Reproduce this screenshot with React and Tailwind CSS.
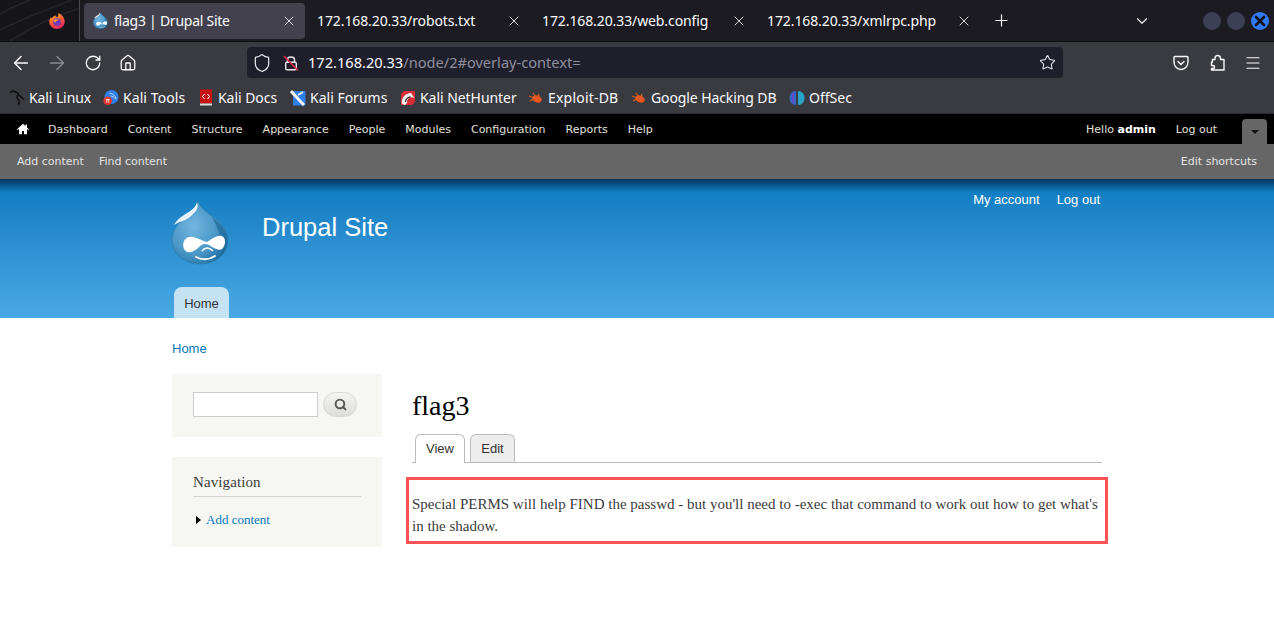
import React from "react";
import { ArrowLeft, ArrowRight, RotateCw, Home, Shield, Star, Menu, X, Plus, ChevronDown, Search } from "lucide-react";

const ui = "font-['Noto_Sans',sans-serif]";

function Drop({ id, className }) {
  return (
    <svg viewBox="0 0 57 65" className={className}>
      <defs>
        <radialGradient id={id} cx="38%" cy="42%" r="70%">
          <stop offset="0" stopColor="#72b6de" />
          <stop offset="0.6" stopColor="#4a97c8" />
          <stop offset="1" stopColor="#1d6a9e" />
        </radialGradient>
      </defs>
      <path d="M27 0C28 7 34 11 41 16C51 23 57 31 57 40C57 54 45 64 29 64C13 64 1 54 1 40C1 29 9 21 17 16C22 13 26 8 27 0Z" fill={`url(#${id})`} stroke="#2f7aa8" strokeWidth="0.6" />
      <path d="M41 17C50 24 56 32 56 40C56 46 53 52 49 56C52 48 52 42 49 35C47 29 44 23 41 17Z" fill="#1f6d9f" opacity="0.75" />
      <path d="M26 2C25 8 19 11 13 15C8 18 5 21 3 25C9 21 16 21 22 14C25 11 28 8 26 2Z" fill="#ffffff" opacity="0.9" />
      <path d="M18 37C25 36 30 41 36 42C41 39 46 35 51 36C55 38 55 45 51 49C47 51 43 48 38 45C34 43 31 44 28 47C25 50 21 53 17 52C11 51 10 39 18 37Z" fill="#ffffff" />
      <path d="M31 51C34 47 38 47 42 51" fill="none" stroke="#ffffff" strokeWidth="1.5" />
      <path d="M25 57C31 60 38 60 44 56" fill="none" stroke="#ffffff" strokeWidth="1.8" strokeLinecap="round" />
    </svg>
  );
}

function Firefox() {
  return (
    <svg width="16" height="16" viewBox="0 0 16 16">
      <defs>
        <linearGradient id="ff" x1="0.1" y1="0" x2="0.6" y2="1">
          <stop offset="0" stopColor="#ffc021" />
          <stop offset="0.55" stopColor="#ff5a35" />
          <stop offset="1" stopColor="#e0246a" />
        </linearGradient>
      </defs>
      <path d="M8 16C3.6 16 .3 12.8 .3 8.8C.3 7 1 5.2 2 4.2C2.2 4.8 2.6 5.2 3 5.4C3.7 3.4 5.4 2.6 6.6 2.2C6.4 3.2 6.8 3.8 7.4 4C8.4 4.2 9.6 4.2 9.4 0C13 1.6 15.7 4.8 15.7 8.8C15.7 12.8 12.4 16 8 16Z" fill="url(#ff)" />
      <circle cx="8" cy="9" r="3.8" fill="#6a3bb8" />
      <path d="M4.5 7.4C6 5.9 9 5.8 10.5 7C8.5 6.8 7 7.8 6.8 9.4C6 9.1 5 8.4 4.5 7.4Z" fill="#ff9a2e" />
    </svg>
  );
}

function Tab({ title, active, icon, className }) {
  return (
    <div className={`${className} h-[36px] flex items-center shrink-0 rounded-[4px] pl-[9px] ${active ? "bg-[#42414d] pr-[8px] tracking-[-0.25px]" : "pr-[9px] tracking-[-0.1px]"}`}>
      {icon}
      <span className="flex-1 text-[14px] text-[#fbfbfe] whitespace-nowrap overflow-hidden">{title}</span>
      <X size={16} strokeWidth={1.4} className="text-[#e6e6ea]" />
    </div>
  );
}

function Mark({ icon, label, w, track }) {
  return (
    <div className={`flex items-center gap-[4px] shrink-0 ${w}`}>
      <span className="w-[16px] h-[16px] flex items-center justify-center shrink-0">{icon}</span>
      <span className={`text-[14px] text-[#fbfbfe] whitespace-nowrap ${track || ""}`}>{label}</span>
    </div>
  );
}

const Bug = () => (
  <svg width="16" height="14" viewBox="0 0 16 14">
    <ellipse cx="9" cy="8" rx="5" ry="3.4" fill="#e8551f" transform="rotate(20 9 8)" />
    <path d="M1 5L6 7M2 10L6 8M5 2L8 6M11 3L10 6" stroke="#d9601f" strokeWidth="1.2" />
  </svg>
);

const KaliDragon = () => (
  <svg width="17" height="17" viewBox="0 0 17 17" fill="none" stroke="#0d0d0d" strokeWidth="1.5">
    <path d="M1 3C4 1 8 2 10 5C12 8 15 9 16 11M10 5C8 7 8 9 10 11C11 12 11 14 10 16" />
  </svg>
);

const KaliTools = () => (
  <svg width="17" height="17" viewBox="0 0 17 17">
    <circle cx="9" cy="8" r="7.5" fill="#2f7fe8" />
    <path d="M7 4C10 4 13 6 14 10M8 7C10 7 12 8 13 10" stroke="#bcd8f8" strokeWidth="1" fill="none" />
    <circle cx="5" cy="12" r="4.5" fill="#e5352c" />
    <path d="M3 10.5H7M4 10.5V14M6 10.5V14" stroke="#fff" strokeWidth="0.9" />
  </svg>
);

const KaliDocs = () => (
  <svg width="14" height="17" viewBox="0 0 14 17">
    <rect x="1" y="0.5" width="12" height="14" fill="#c81414" />
    <rect x="1" y="14.5" width="12" height="2" fill="#ddd" />
    <path d="M5.5 5L3.5 7.5L5.5 10M8.5 5L10.5 7.5L8.5 10" stroke="#fff" strokeWidth="1" fill="none" />
  </svg>
);

const KaliForums = () => (
  <svg width="16" height="16" viewBox="0 0 16 16">
    <path d="M3 1H15.5V15.5H3Z" fill="#2f7fe8" />
    <path d="M1 1L10 11L14 15" stroke="#f2f2f2" strokeWidth="3" fill="none" />
    <path d="M8 5L13 2" stroke="#f2f2f2" strokeWidth="1.5" />
  </svg>
);

const NetHunter = () => (
  <svg width="16" height="16" viewBox="0 0 16 16">
    <path d="M4 1H15V12L12 15H1V4Z" fill="#d92c35" />
    <path d="M2 14C1 8 5 3 11 3L14.5 8C10 6 7 8 7 13L5 15Z" fill="#f0f0f0" />
    <path d="M5.5 12C5.5 9 8 7 10.5 7" stroke="#333" strokeWidth="1.3" fill="none" />
  </svg>
);

const OffSec = () => (
  <svg width="16" height="16" viewBox="0 0 16 16">
    <path d="M7 1C3 1 0.5 4 0.5 8C0.5 12 3 15 7 15Z" fill="#2f69c9" />
    <path d="M9 1C13 1 15.5 4 15.5 8C15.5 12 13 15 9 15Z" fill="#2aa3c8" />
    <path d="M5 3C3.5 5 3.5 11 5 13" stroke="#7a3fc0" strokeWidth="1.6" fill="none" />
  </svg>
);

function Browser() {
  return (
    <div className={`${ui} bg-[#3a3a41] h-[113px] flex flex-col`}>
      <div className="h-[41px] bg-[#1c1b22] flex items-center">
        <div className="relative w-[80px] h-full shrink-0 flex items-center justify-start pl-[49px] border-r border-[#4a4a50] bg-[#15151a] overflow-hidden">
          <svg width="80" height="41" viewBox="0 0 80 41" fill="none" stroke="#26262c" strokeWidth="1.5" className="absolute left-0 top-0">
            <path d="M0 30C20 20 40 12 72 0M10 41C30 28 55 16 80 8M0 14C10 8 20 4 30 0" />
          </svg>
          <span className="relative flex"><Firefox /></span>
        </div>
        <div className="ml-[4px] flex items-center">
          <Tab active className="w-[221px] mr-[3px]" title="flag3 | Drupal Site" icon={<span className="mr-[6px] flex"><Drop id="dt" className="w-[15px] h-[17px]" /></span>} />
          <Tab className="w-[223px] mr-[2px]" title="172.168.20.33/robots.txt" icon={null} />
          <Tab className="w-[223px] mr-[2px]" title="172.168.20.33/web.config" icon={null} />
          <Tab className="w-[223px]" title="172.168.20.33/xmlrpc.php" icon={null} />
          <Plus size={19} strokeWidth={1.5} className="text-[#fbfbfe] ml-[11px]" />
        </div>
        <ChevronDown size={18} strokeWidth={1.6} className="text-[#e6e6ea] ml-[122px]" />
        <div className="flex items-center gap-[6px] ml-[52px]">
          <span className="w-[18px] h-[18px] rounded-full bg-[#3d4055]"></span>
          <span className="w-[18px] h-[18px] rounded-full bg-[#3d4055]"></span>
          <span className="w-[18px] h-[18px] rounded-full bg-[#2f7bf2] flex items-center justify-center"><X size={16} strokeWidth={4} className="text-[#10131c]" /></span>
        </div>
      </div>
      <div className="h-[42px] border-t border-[#0f0f12] flex items-center">
        <div className="w-[247px] flex items-center shrink-0 pl-[10px]">
          <ArrowLeft size={22} strokeWidth={1.6} className="text-[#fbfbfe]" />
          <ArrowRight size={22} strokeWidth={1.6} className="text-[#8a8a90] ml-[14px]" />
          <RotateCw size={18} strokeWidth={1.7} className="text-[#fbfbfe] ml-[16px]" />
          <Home size={18} strokeWidth={1.7} className="text-[#fbfbfe] ml-[17px]" />
        </div>
        <div className="w-[816px] h-[31px] bg-[#1f1e2b] rounded-[4px] flex items-center pl-[5px] pr-[7px] shrink-0">
          <Shield size={20} strokeWidth={1.5} className="text-[#e8e8ec]" />
          <svg width="16" height="16" viewBox="0 0 16 16" fill="none" className="ml-[11px]">
            <path d="M4.5 7V4.5C4.5 1.2 11.5 1.2 11.5 4.5V7" stroke="#e8e8ec" strokeWidth="1.4" />
            <rect x="2.7" y="7.2" width="10.6" height="7.6" rx="1.2" stroke="#e8e8ec" strokeWidth="1.4" />
            <path d="M1 1L15 15.5" stroke="#e22850" strokeWidth="1.5" />
          </svg>
          <span className="ml-[9px] text-[14.6px] text-[#fbfbfe] whitespace-nowrap">172.168.20.33<span className="text-[#8f8f9d]">/node/2#overlay-context=</span></span>
          <Star size={17} strokeWidth={1.5} className="text-[#e8e8ec] ml-auto" />
        </div>
        <div className="flex items-center ml-[110px]">
          <svg width="16" height="16" viewBox="0 0 16 16" fill="none" stroke="#fbfbfe" strokeWidth="1.4"><path d="M2 1.5H14C14.6 1.5 15 2 15 2.5V7C15 11 12 14.5 8 14.5C4 14.5 1 11 1 7V2.5C1 2 1.4 1.5 2 1.5Z" /><path d="M5 6.5L8 9.5L11 6.5" strokeLinecap="round" /></svg>
          <svg width="16" height="17" viewBox="0 0 16 17" fill="none" stroke="#fbfbfe" strokeWidth="1.4" strokeLinejoin="round" className="ml-[21px]">
            <path d="M2.5 8H1.5V11.5H3C5 11.5 5 14.5 3 14.5H1.5V16H14V5.5H10.5V4.5C10.5 0.5 5 0.5 5 4.5V5.5H2.5Z" />
          </svg>
          <Menu size={18} strokeWidth={1.6} className="text-[#fbfbfe] ml-[18px]" />
        </div>
      </div>
      <div className="h-[30px] flex items-center pl-[9px] pb-[1px]">
        <Mark w="w-[94px]" track="tracking-[-0.1px]" icon={<KaliDragon />} label="Kali Linux" />
        <Mark w="w-[95px]" track="tracking-[0.08px]" icon={<KaliTools />} label="Kali Tools" />
        <Mark w="w-[92px]" track="tracking-[-0.05px]" icon={<KaliDocs />} label="Kali Docs" />
        <Mark w="w-[110px]" icon={<KaliForums />} label="Kali Forums" />
        <Mark w="w-[128px]" track="tracking-[-0.05px]" icon={<NetHunter />} label="Kali NetHunter" />
        <Mark w="w-[103px]" track="tracking-[0.2px]" icon={<Bug />} label="Exploit-DB" />
        <Mark w="w-[158px]" track="tracking-[-0.1px]" icon={<Bug />} label="Google Hacking DB" />
        <Mark icon={<OffSec />} label="OffSec" />
      </div>
    </div>
  );
}

function AdminBar() {
  const items = ["Dashboard", "Content", "Structure", "Appearance", "People", "Modules", "Configuration", "Reports", "Help"];
  return (
    <div className="font-['DejaVu_Sans',sans-serif] text-[11px]">
      <div className="h-[31px] bg-black border-t border-[#2a2a2e] flex items-center text-[#e0e0d8]">
        <svg width="12" height="12" viewBox="0 0 12 12" className="ml-[17px] mr-[19px] shrink-0" fill="#fff">
          <path d="M6 .8L0 6.2L.8 7L2 6V11.2H5V8H7V11.2H10V6L11.2 7L12 6.2L10 4.4V1.5H8.5V3L6 .8Z" />
        </svg>
        <div className="flex gap-[20px] pt-[2px]">
          {items.map((i) => <span key={i}>{i}</span>)}
        </div>
        <div className="ml-auto flex items-center h-full">
          <span className="pt-[2px]">Hello <b className="text-white">admin</b></span>
          <span className="ml-[20px] pt-[2px]">Log out</span>
          <div className="ml-[25px] mr-[7px] w-[25px] h-[25px] self-end bg-[#666] rounded-t-[4px] flex items-center justify-center">
            <span className="w-0 h-0 border-x-[4px] border-x-transparent border-t-[4px] border-t-[#111]"></span>
          </div>
        </div>
      </div>
      <div className="h-[35px] bg-[#666] flex items-center px-[17px] pt-[2px] text-[#e4e4e4]">
        <span>Add content</span>
        <span className="ml-[15px]">Find content</span>
        <span className="ml-auto">Edit shortcuts</span>
      </div>
    </div>
  );
}

function SiteHeader() {
  return (
    <div className="relative h-[139px] bg-gradient-to-b from-[#0779bf] to-[#48a9e4] font-['Liberation_Sans',sans-serif]">
      <div className="absolute inset-x-0 top-0 h-[13px] bg-gradient-to-b from-[#00233f]/80 to-transparent"></div>
      <div className="relative w-[930px] h-full ml-[172px] flex flex-col">
        <div className="flex flex-1">
          <div className="mt-[21px] -ml-[1px] shrink-0"><Drop id="dl" className="w-[57px] h-[65px]" /></div>
          <h1 className="ml-[34px] mt-[31px] text-[25.5px] leading-[34px] text-white">Drupal Site</h1>
          <div className="ml-auto mt-[12px] mr-[2px] text-[13px] leading-[17px] text-white flex gap-[17px]">
            <span>My account</span>
            <span>Log out</span>
          </div>
        </div>
        <div className="ml-[2px] w-[55px] h-[31px] pt-[2px] bg-[#c5e2f5] rounded-t-[8px] text-[#333] text-[13px] flex items-center justify-center">Home</div>
      </div>
    </div>
  );
}

function Sidebar() {
  return (
    <aside className="w-[210px] shrink-0 font-['Liberation_Serif',serif]">
      <div className="h-[63px] bg-[#f6f6f2] flex items-center pl-[21px] pb-[3px]">
        <div className="w-[125px] h-[25px] bg-white border border-[#ccc]"></div>
        <div className="ml-[5px] w-[34px] h-[25px] rounded-[13px] bg-gradient-to-b from-[#f5f5f3] to-[#dcdcd8] border border-[#d8d8d4] flex items-center justify-center">
          <Search size={13} strokeWidth={3.6} className="text-[#555]" />
        </div>
      </div>
      <div className="mt-[20px] h-[90px] bg-[#f6f6f2] px-[21px] pt-[15px]">
        <h2 className="text-[15px] leading-[20px] text-[#3b3b3b] border-b border-[#d4d4d0] w-[168px] pb-[4px] tracking-[0.1px]">Navigation</h2>
        <div className="flex items-center mt-[14px] text-[13px] leading-[17px] text-[#0678be]">
          <span className="ml-[3px] w-0 h-0 border-y-[4px] border-y-transparent border-l-[5px] border-l-black"></span>
          <span className="ml-[5px]">Add content</span>
        </div>
      </div>
    </aside>
  );
}

function Main() {
  return (
    <main className="ml-[30px] w-[690px] font-['Liberation_Serif',serif]">
      <h1 className="mt-[15px] text-[28px] leading-[34px] text-black">flag3</h1>
      <div className="mt-[11px] h-[29px] border-b border-[#bbb] flex items-end font-['Liberation_Sans',sans-serif] text-[13px] pl-[3px]">
        <div className="w-[50px] h-[29px] -mb-[1px] bg-white border border-b-0 border-[#bbb] rounded-t-[6px] flex items-center justify-center text-[#333]">View</div>
        <div className="ml-[5px] w-[45px] h-[28px] bg-[#ededed] border border-b-0 border-[#bbb] rounded-t-[6px] flex items-center justify-center text-[#333]">Edit</div>
      </div>
      <div className="-ml-[6px] -mr-[6px] mt-[14px] h-[67px] border-[3px] border-[#ff5257] pl-[3px] pr-[3px] pt-[13px] text-[15px] leading-[22px] text-[#3b3b3b]">
        Special PERMS will help FIND the passwd - but you'll need to -exec that command to work out how to get what's in the shadow.
      </div>
    </main>
  );
}

export default function App() {
  return (
    <div className="w-[1274px] h-[635px] overflow-hidden bg-white">
      <Browser />
      <AdminBar />
      <SiteHeader />
      <div className="ml-[172px]">
        <div className="pt-[22px] h-[56px] font-['Liberation_Sans',sans-serif] text-[13px] leading-[17px] text-[#0678be]">Home</div>
        <div className="flex">
          <Sidebar />
          <Main />
        </div>
      </div>
    </div>
  );
}
